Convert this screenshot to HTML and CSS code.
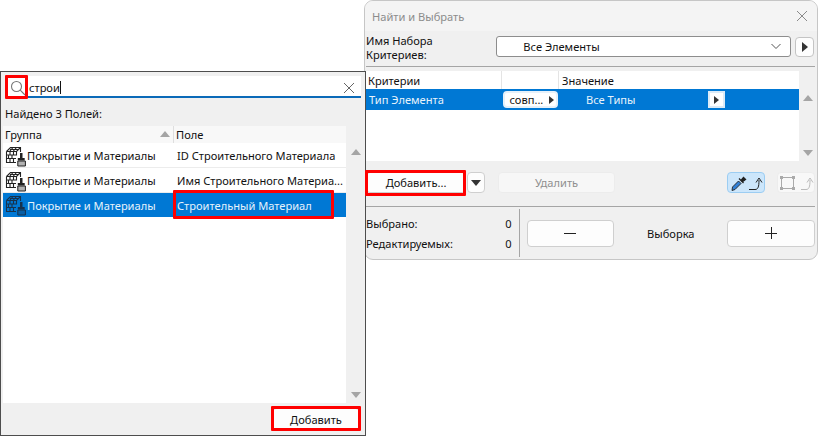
FILE: index.html
```html
<!DOCTYPE html>
<html lang="ru">
<head>
<meta charset="utf-8">
<title>Найти и Выбрать</title>
<link rel="stylesheet" href="styles.css">
</head>
<body>
<svg class="defs" width="0" height="0">
  <symbol id="mat" viewBox="0 0 22 22">
    <path d="M1.500 6.500 5.500 2.500H15.500V7M1.500 6.500H11.500L15.500 2.500M1.500 6.500V17.500H11M1.500 10H11.500V7M1.500 13.500H11M5 6.500V10M8.500 6.500V10M3.500 10V13.500M7 10V13.500M5 13.500V17.500M8.500 13.500V17.500M5 4.500H13.500M8 2.500 4.500 6.500M11.500 2.500 8 6.500M11.500 6.500V10" fill="none" stroke="currentColor" stroke-width="1.100"/>
    <path d="M15 8h2.500v5h2.200v2.500h-6.900v-2.500h2.200z" fill="currentColor"/>
    <path d="M12.800 16h7.600v5h-7.600z" fill="currentColor" opacity=".35"/>
    <path d="M12.800 16h7.600v5h-7.600z" fill="none" stroke="currentColor" stroke-width="1"/>
  </symbol>
</svg>

<section class="win win-right">
  <header class="title-bar">
    <span class="title">Найти и Выбрать</span>
    <svg class="close" width="14" height="14" viewBox="0 0 14 14"><path d="M2 2 12 12M12 2 2 12" stroke="#8a8a8a" stroke-width="1" fill="none"/></svg>
  </header>
  <div class="set-row">
    <label class="set-label">Имя Набора<br>Критериев:</label>
    <div class="select">
      <span>Все Элементы</span>
      <svg width="12" height="7" viewBox="0 0 12 7"><path d="M1.500 1 6 5.500 10.500 1" stroke="#555" fill="none"/></svg>
    </div>
    <button class="play-btn"><i class="tri-r"></i></button>
  </div>
  <div class="rule"></div>
  <div class="crit-wrap">
    <div class="crit-table">
      <div class="crit-head">
        <span class="c1">Критерии</span><span class="c2"></span><span class="c3">Значение</span>
      </div>
      <div class="crit-row">
        <span class="c1">Тип Элемента</span>
        <span class="c2"><b class="match">совп...<i class="tri-r small"></i></b></span>
        <span class="c3 val">Все Типы<b class="val-btn"><i class="tri-r small"></i></b></span>
      </div>
    </div>
    <div class="crit-scroll"><i class="tri-u"></i><i class="tri-d"></i></div>
  </div>
  <div class="action-row">
    <button class="btn add-btn">Добавить...</button>
    <button class="btn drop-btn"><i class="tri-d dark"></i></button>
    <button class="btn del-btn">Удалить</button>
    <span class="spacer"></span>
    <button class="btn tool on">
      <svg width="34" height="18" viewBox="0 0 34 18">
        <path d="M3 16.500 3.500 13 9.500 7 12 9.500 6 15.500Z" fill="#2f7fd6" stroke="#222" stroke-width=".9"/>
        <path d="M10 4.500 14.500 9M12 6.500 14.500 3.500 16.500 5.500 13 8" stroke="#222" stroke-width="1.300" fill="#222"/>
        <path d="M20 15.500H26C29 15.500 30 13 30 6M27 8.500 30 4 33 8.500" stroke="#222" fill="none" stroke-width="1"/>
      </svg>
    </button>
    <button class="btn tool off">
      <svg width="36" height="18" viewBox="0 0 36 18">
        <path d="M3.500 3.500H15.500V14.500H3.500Z" fill="none" stroke="#aaa"/>
        <path d="M2 2h3v3H2zM14 2h3v3h-3zM2 13h3v3H2zM14 13h3v3h-3z" fill="#aaa"/>
        <path d="M23 15.500H28C31 15.500 32 13 32 6M29 8.500 32 4 35 8.500" stroke="#bbb" fill="none"/>
      </svg>
    </button>
  </div>
  <div class="rule"></div>
  <div class="sel-row">
    <div class="counts">
      <div class="count"><span>Выбрано:</span><span>0</span></div>
      <div class="count"><span>Редактируемых:</span><span>0</span></div>
    </div>
    <div class="vline"></div>
    <button class="btn big minus">
      <svg width="14" height="14" viewBox="0 0 14 14"><path d="M1 7.500H13" stroke="#222"/></svg>
    </button>
    <span class="sel-label">Выборка</span>
    <button class="btn big">
      <svg width="14" height="14" viewBox="0 0 14 14"><path d="M1 7.500H13M7.500 1V13" stroke="#222"/></svg>
    </button>
  </div>
</section>

<section class="win win-left">
  <div class="search">
    <svg class="lens" width="16" height="16" viewBox="0 0 16 16"><circle cx="6.500" cy="6.500" r="5" fill="none" stroke="#777" stroke-width="1.100"/><path d="M10.200 10.200 15 15" stroke="#777" stroke-width="1.100"/></svg>
    <span class="query">строи</span>
    <svg class="s-x" width="12" height="12" viewBox="0 0 12 12"><path d="M1 1 11 11M11 1 1 11" stroke="#666" fill="none"/></svg>
  </div>
  <div class="found">Найдено 3 Полей:</div>
  <div class="field-wrap">
    <div class="field-table">
      <div class="f-head">
        <span class="g">Группа<i class="tri-u sort"></i></span><span class="f">Поле</span>
      </div>
      <div class="f-row">
        <span class="g"><svg class="mat" width="22" height="22"><use href="#mat"/></svg>Покрытие и Материалы</span><span class="f">ID Строительного Материала</span>
      </div>
      <div class="f-row">
        <span class="g"><svg class="mat" width="22" height="22"><use href="#mat"/></svg>Покрытие и Материалы</span><span class="f">Имя Строительного Материа...</span>
      </div>
      <div class="f-row sel">
        <span class="g"><svg class="mat" width="22" height="22"><use href="#mat"/></svg>Покрытие и Материалы</span><span class="f">Строительный Материал</span>
      </div>
    </div>
    <div class="f-scroll"><i class="tri-u"></i><i class="tri-d"></i></div>
  </div>
  <div class="foot"><button class="btn foot-btn">Добавить</button></div>
</section>

<div class="mark m-lens"></div>
<div class="mark m-field"></div>
<div class="mark m-foot"></div>
<div class="mark m-add"></div>
</body>
</html>
```

FILE: styles.css
```css
* { box-sizing: border-box; }
html, body { margin: 0; height: 100%; }
body {
  position: relative;
  width: 819px;
  height: 437px;
  overflow: hidden;
  background: #fff;
  font-family: "Noto Sans", sans-serif;
  font-size: 11.1px;
  color: #111;
}
.defs { position: absolute; }
i { display: inline-block; }
button { font: inherit; color: inherit; padding: 0; }

.tri-r { width: 0; height: 0; border-left: 6px solid #333; border-top: 5px solid transparent; border-bottom: 5px solid transparent; }
.tri-r.small { border-left-width: 5px; border-top-width: 4.500px; border-bottom-width: 4.500px; }
.tri-u { width: 0; height: 0; border-left: 5px solid transparent; border-right: 5px solid transparent; border-bottom: 6px solid #a5a5a5; }
.tri-d { width: 0; height: 0; border-left: 5px solid transparent; border-right: 5px solid transparent; border-top: 6px solid #a5a5a5; }
.tri-d.dark { border-top-color: #333; }

.win { position: absolute; background: #f0f0f0; }

/* right window */
.win-right {
  left: 364px; top: 0; width: 454px; height: 260px;
  border: 1px solid #c6c6c6;
  border-radius: 9px;
  overflow: hidden;
  display: flex; flex-direction: column;
}
.title-bar {
  height: 30px; flex: none;
  background: #f4f4f4;
  display: flex; align-items: center; justify-content: space-between;
  padding: 0 8px 0 7px;
}
.title { color: #8c8c8c; }
.set-row { height: 35px; flex: none; display: flex; align-items: flex-start; padding: 5px 3px 0 1px; }
.set-label { width: 131px; line-height: 14px; margin-top: -2px; }
.select {
  width: 296px; height: 21px;
  background: #fff;
  border: 1px solid #8d8d8d;
  border-radius: 3px;
  display: flex; align-items: center; justify-content: space-between;
  padding: 0 8px 0 26px;
}
.play-btn {
  width: 19px; height: 20px; margin-left: 4px; margin-top: 1px;
  background: #fdfdfd;
  border: 1px solid #c4c4c4;
  border-radius: 4px;
  display: flex; align-items: center; justify-content: center;
}
.rule { height: 1px; flex: none; background: #a5a5a5; margin: 0 2px 0 1px; }
.crit-wrap { height: 90px; flex: none; margin-top: 4px; display: flex; padding-left: 1px; }
.crit-table { width: 433px; background: #fff; }
.crit-head, .crit-row { display: grid; grid-template-columns: 135px 58px 240px; align-items: center; }
.crit-head { height: 18px; }
.crit-head .c2 { height: 18px; border-left: 1px solid #e4e4e4; border-right: 1px solid #e4e4e4; }
.crit-head .c1 { padding-left: 2px; }
.crit-head .c3 { padding-left: 3px; }
.crit-row { height: 21px; background: #0078d4; color: #e9f3fb; }
.crit-row .c1 { padding-left: 3px; }
.crit-row .c2 { display: flex; height: 21px; align-items: center; justify-content: center; }
.match {
  font-weight: 400; color: #111;
  width: 55px; height: 17px;
  background: #fff;
  border: 2px solid #e6f1fa;
  border-radius: 4px;
  display: flex; align-items: center; justify-content: space-between;
  padding: 0 2px 0 5px;
}
.val { display: flex; align-items: center; padding-left: 27px; }
.val-btn {
  width: 17px; height: 17px; margin-left: 73px;
  background: #fff;
  border: 2px solid #dcebf7;
  display: flex; align-items: center; justify-content: center;
}
.crit-scroll { flex: 1; display: flex; flex-direction: column; align-items: center; justify-content: space-between; padding: 24px 0 5px; }
.action-row { height: 45px; flex: none; display: flex; align-items: center; padding: 0 2px 2px 1px; }
.btn {
  background: #fdfdfd;
  border: 1px solid #cfcfcf;
  border-radius: 4px;
  display: flex; align-items: center; justify-content: center;
}
.add-btn { width: 100px; height: 21px; }
.drop-btn { width: 18px; height: 21px; margin-left: 1px; }
.del-btn { width: 117px; height: 21px; margin-left: 13px; color: #8f8f8f; background: #f7f7f7; border-color: #ececec; }
.spacer { flex: 1; }
.tool { width: 38px; height: 21px; }
.tool.on { background: #cce6fb; border-color: #9ccdf2; }
.tool.off { margin-left: 12px; background: #f8f8f8; border-color: #ececec; }
.sel-row { flex: 1; display: flex; align-items: center; padding: 0 2px 0 1px; }
.counts { width: 153px; display: flex; flex-direction: column; gap: 6px; padding: 2px 7px 0 0; }
.count { display: flex; justify-content: space-between; height: 14px; line-height: 14px; }
.vline { width: 1px; height: 48px; background: #a5a5a5; }
.big { width: 88px; height: 27px; margin-left: 8px; }
.big.minus { margin-left: 7px; }
.sel-label { width: 113px; text-align: center; flex: none; margin-right: -8px; }

/* left window */
.win-left {
  left: 0; top: 71px; width: 366px; height: 365px;
  border: 1px solid #4d4d4d;
  display: flex; flex-direction: column;
  background: #f0f0f0;
}
.search {
  height: 22px; flex: none;
  margin: 4px 4px 0 4px;
  background: #fff;
  border-bottom: 2px solid #0a6ab8;
  display: flex; align-items: center;
  padding: 3px 6px 0 5px;
}
.query { flex: 1; margin-left: 3px; }
.query::after { content: ""; display: inline-block; width: 1px; height: 13px; background: #111; vertical-align: -2px; }
.found { height: 28px; flex: none; padding: 2px 0 0 4px; display: flex; align-items: center; }
.field-wrap { flex: 1; display: flex; padding-left: 2px; min-height: 0; }
.field-table { width: 343px; background: #fff; }
.f-head, .f-row { display: grid; grid-template-columns: 171px 172px; align-items: center; }
.f-head { height: 17px; background: #f8f8f8; }
.f-head .g { position: relative; padding-left: 2px; height: 17px; line-height: 17px; border-right: 1px solid #dedede; }
.f-head .f { padding-left: 2px; }
.sort { position: absolute; right: 3px; top: 5px; }
.f-row { height: 25px; }
.f-row .g { display: flex; align-items: center; padding-left: 2px; white-space: nowrap; }
.f-row .f { padding-left: 3px; white-space: nowrap; }
.f-row:nth-child(2) { box-shadow: inset 0 -1px 0 #ececec; }
.f-row:nth-child(3) { box-shadow: inset 0 -1px 0 #ececec; }
.mat { color: #222; flex: none; }
.f-row.sel { height: 24px; background: #0078d4; color: #e6f2fb; }
.f-row.sel .mat { color: #17324d; }
.f-scroll { flex: 1; display: flex; flex-direction: column; align-items: center; justify-content: space-between; padding: 23px 0 5px; }
.foot { height: 32px; flex: none; display: flex; justify-content: flex-end; align-items: center; padding-right: 5px; }
.foot-btn { width: 88px; height: 23px; }

/* annotations */
.mark { position: absolute; border: 3px solid #f00; border-radius: 1px; }
.m-lens { left: 5px; top: 75px; width: 23px; height: 24px; }
.m-field { left: 173px; top: 190px; width: 161px; height: 29px; }
.m-foot { left: 271px; top: 406px; width: 90px; height: 25px; }
.m-add { left: 365px; top: 170px; width: 101px; height: 26px; }
```
